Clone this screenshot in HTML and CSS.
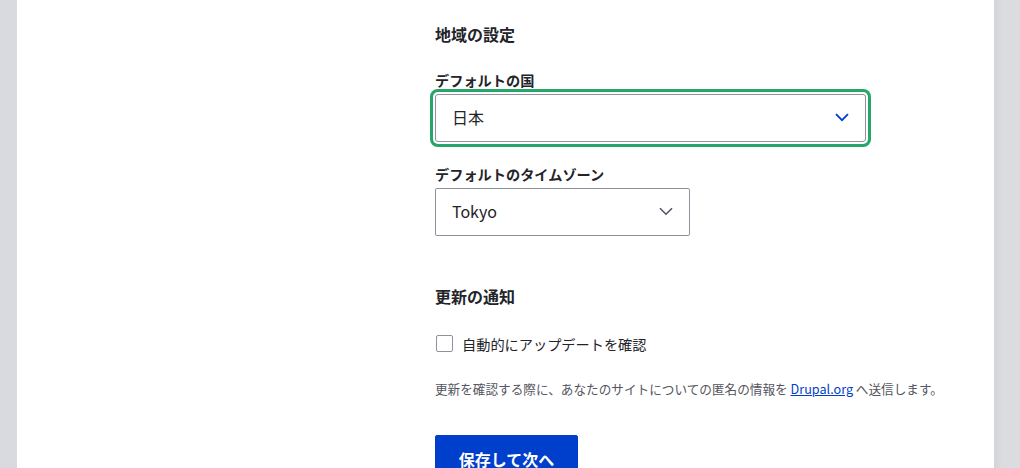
FILE: index.html
```html
<!DOCTYPE html>
<html lang="ja">
<head>
<meta charset="utf-8">
<title>地域の設定</title>
<link rel="stylesheet" href="styles.css">
</head>
<body>
<div class="page">
  <div class="gutter gutter-left"></div>
  <main class="panel">
    <form class="form">
      <h2 class="section-title">地域の設定</h2>
      <div class="form-item">
        <label class="form-label">デフォルトの国</label>
        <div class="select select-wide is-focused">
          <span class="select-value">日本</span>
          <svg class="chevron" width="14" height="9" viewBox="0 0 14 9"><path d="M1 1.2 L7 7.2 L13 1.2" fill="none" stroke="#003ecc" stroke-width="1.8"/></svg>
        </div>
      </div>
      <div class="form-item form-item-tz">
        <label class="form-label">デフォルトのタイムゾーン</label>
        <div class="select select-narrow">
          <span class="select-value">Tokyo</span>
          <svg class="chevron" width="14" height="9" viewBox="0 0 14 9"><path d="M1 1.2 L7 7.2 L13 1.2" fill="none" stroke="#545560" stroke-width="1.6"/></svg>
        </div>
      </div>
      <h2 class="section-title section-title-updates">更新の通知</h2>
      <div class="checkbox-row">
        <span class="checkbox"></span>
        <span class="checkbox-label">自動的にアップデートを確認</span>
      </div>
      <p class="description">更新を確認する際に、あなたのサイトについての匿名の情報を <a href="#" class="link">Drupal.org</a> へ送信します。</p>
      <div class="actions">
        <button type="button" class="button-primary">保存して次へ</button>
      </div>
    </form>
  </main>
  <div class="gutter gutter-right"></div>
</div>
</body>
</html>
```

FILE: styles.css
```css
html, body {
  margin: 0;
  padding: 0;
  height: 100%;
  overflow: hidden;
}

body {
  font-family: "Noto Sans CJK JP", "Noto Sans", sans-serif;
  color: #232429;
  background: #ffffff;
}

.page {
  display: flex;
  height: 468px;
  overflow: hidden;
}

.gutter {
  flex: none;
  background: linear-gradient(to right, #d3d4d9, #dbdce0 8px);
}

.gutter-left {
  width: 17px;
  background: #d9dadf;
}

.gutter-right {
  width: 26px;
}

.panel {
  flex: 1;
  background: #ffffff;
  padding-left: 418px;
  padding-top: 22px;
  box-sizing: border-box;
}

.form {
  display: flex;
  flex-direction: column;
  align-items: flex-start;
}

.section-title {
  margin: 0;
  font-size: 16px;
  line-height: 24px;
  font-weight: 700;
}

.form-item {
  display: flex;
  flex-direction: column;
  align-items: flex-start;
  margin-top: 24px;
}

.form-item-tz {
  margin-top: 22px;
}

.form-label {
  font-size: 14.2px;
  line-height: 20px;
  font-weight: 600;
  margin-bottom: 4px;
}

.select {
  display: flex;
  align-items: center;
  justify-content: space-between;
  height: 48px;
  box-sizing: border-box;
  border: 1px solid #8e929c;
  border-radius: 2px;
  padding: 0 16px 0 16px;
  font-size: 16px;
  background: #fff;
}

.select-wide {
  width: 431px;
}

.select-narrow {
  width: 255px;
}

.is-focused {
  box-shadow: 0 0 0 2px #ffffff, 0 0 0 5px #26a769;
  border-radius: 3px;
}

.select-value {
  line-height: 22px;
  margin-top: -2px;
}

.chevron {
  display: block;
  margin-top: -1px;
}

.section-title-updates {
  margin-top: 48px;
}

.checkbox-row {
  display: flex;
  align-items: center;
  gap: 9px;
  margin-top: 26px;
  height: 18px;
}

.checkbox {
  display: block;
  width: 17px;
  height: 17px;
  margin-left: 1px;
  box-sizing: border-box;
  border: 1px solid #8e929c;
  border-radius: 2px;
  background: #fff;
}

.checkbox-label {
  font-size: 14.2px;
  line-height: 18px;
  padding-top: 2px;
}

.description {
  margin: 28px 0 0 0;
  font-size: 12.64px;
  line-height: 18px;
  color: #545560;
}

.link {
  color: #003ecc;
  text-decoration: underline;
}

.actions {
  margin-top: 37px;
}

.button-primary {
  display: block;
  font-family: inherit;
  font-size: 16px;
  font-weight: 700;
  line-height: 22px;
  color: #ffffff;
  background: #003ecc;
  border: 1px solid #003ecc;
  border-radius: 2px;
  padding: 12px 0;
  width: 143px;
  text-align: center;
  white-space: nowrap;
}
```
